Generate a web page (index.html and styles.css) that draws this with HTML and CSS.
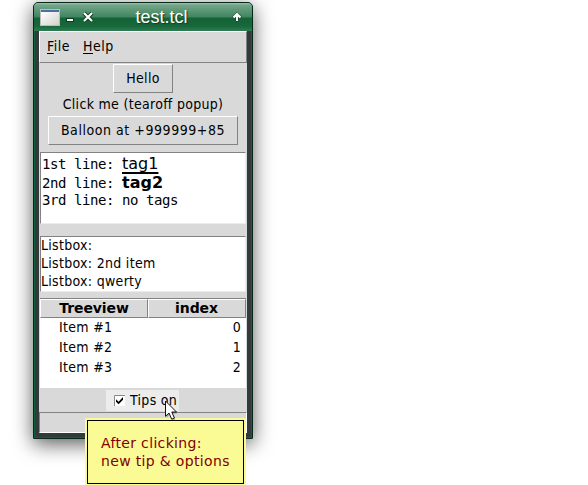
FILE: index.html
```
<!DOCTYPE html>
<html lang="en">
<head>
<meta charset="utf-8">
<title>test.tcl</title>
<link rel="stylesheet" href="styles.css">
</head>
<body>
<div class="window">
  <header class="titlebar">
    <svg class="app-icon" width="20" height="17" viewBox="0 0 20 17"><defs><linearGradient id="g" x2="1" y2="1"><stop stop-color="#fff"/><stop offset="1" stop-color="#d2d2cd"/></linearGradient></defs><rect width="20" height="17" fill="#b9beb9"/><rect x="1" y="1" width="18" height="2" fill="#4a6ea8"/><rect x="1" y="3" width="18" height="13" fill="url(#g)"/></svg>
    <svg class="minimize" width="8" height="12" viewBox="0 0 8 12"><path d="M0 7h8v4H0z" fill="#0b3f22"/><path d="M1 8h6v2H1z" fill="#fff"/></svg>
    <svg class="close" width="12" height="12" viewBox="0 0 12 12"><path d="M2 2l8 8M10 2l-8 8" stroke="#0b3f22" stroke-width="4"/><path d="M2 2l8 8M10 2l-8 8" stroke="#fff" stroke-width="2.2"/></svg>
    <span class="title">test.tcl</span>
    <svg class="shade" width="10" height="10" viewBox="0 0 10 10"><path d="M5 .5L.8 4.7l1.4 1.5L4 4.8V9h2V4.8l1.8 1.4 1.4-1.5z" fill="#fff" stroke="#0b3f22" stroke-width="1" paint-order="stroke"/></svg>
  </header>
  <main class="client">
    <nav class="menubar"><span><u>F</u>ile</span><span><u>H</u>elp</span></nav>
    <button class="button hello"><span>Hello</span></button>
    <div class="label"><span>Click me (tearoff popup)</span></div>
    <button class="button balloon"><span>Balloon at +999999+85</span></button>
    <div class="text">
      <div class="line first">1st line: <span class="tag1">tag1</span></div>
      <div class="line second">2nd line: <b class="tag2">tag2</b></div>
      <div class="line third">3rd line: no tags</div>
    </div>
    <div class="listbox"><div>Listbox:</div><div>Listbox: 2nd item</div><div>Listbox: qwerty</div></div>
    <div class="tree">
      <div class="heading">Treeview</div><div class="heading index">index</div>
      <div class="item">Item #1</div><div class="value">0</div>
      <div class="item">Item #2</div><div class="value">1</div>
      <div class="item">Item #3</div><div class="value">2</div>
    </div>
    <div class="check">
      <svg width="11" height="11" viewBox="0 0 11 11"><path d="M0 0h11v11H0z" fill="#fff"/><path d="M.5 11V.5H11" fill="none" stroke="#888"/><path d="M2 4.3l2.6 2.4L9 2v2.8L4.6 9.2 2 6.8z" fill="#000"/></svg>
      <span>Tips on</span>
    </div>
    <div class="status"></div>
  </main>
</div>
<div class="tooltip"><div><span class="tip1">After clicking:</span><br><span class="tip2">new tip &amp; options</span></div></div>
<svg class="cursor" width="15" height="22" viewBox="0 0 15 22"><path d="M1.5 1.5v15.3l3.5-3.3 2.7 6.2 2.7-1.2-2.6-6h4.7z" transform="translate(1 1)" fill="#000" opacity=".25"/><path d="M1.5 1v15.3L5 13l2.7 6.2 2.7-1.2-2.6-6H12.5z" fill="#fff" stroke="#111"/></svg>
</body>
</html>
```
FILE: styles.css
```
* { box-sizing: border-box; }
body { margin: 0; width: 588px; height: 485px; overflow: hidden; position: relative; background: #fff; color: #000; font: 14px/18px "DejaVu Sans Condensed", "DejaVu Sans", sans-serif; font-stretch: condensed; letter-spacing: .3px; white-space: nowrap; }
svg { display: block; flex: none; }
.window { width: 220px; height: 437px; margin: 2px 0 0 33px; display: flex; flex-direction: column; border: 1px solid #032b18; border-radius: 5px 5px 1px 1px; background: #343a3c; box-shadow: inset 1px 0 #08643a, inset -1px 0 #08643a, inset 0 -1px #08643a, 0 5px 20px rgba(0,0,0,.65); }
.titlebar { height: 28px; flex: none; display: flex; align-items: center; padding: 0 10px 0 6px; border-radius: 4px 4px 0 0; background: linear-gradient(#a3c2b0 0, #74a58a 2px, #3f8560 14px, #146337 15px, #18673b 23px, #2f7d53 28px); }
.minimize { margin-left: 6px; }
.close { margin-left: 8px; }
.title { flex: 1; text-align: center; margin-left: -3px; font: 18px/28px "Liberation Sans", sans-serif; letter-spacing: 0; color: #fff; text-shadow: 1px 1px 1px #0b3f22; }
.client { width: 208px; height: 402px; margin-left: 5px; background: #d9d9d9; display: flex; flex-direction: column; align-items: center; }
.menubar { align-self: stretch; height: 32px; flex: none; display: flex; gap: 13px; padding: 5px 7px; border: 1px solid; border-color: #fff #828282 #828282 #fff; letter-spacing: .5px; }
u { text-underline-offset: 2px; text-decoration-thickness: 1px; }
.button { font: inherit; color: inherit; letter-spacing: inherit; height: 29px; margin: 0; padding: 0 0 2px; flex: none; background: #d9d9d9; border: 1px solid; border-color: #fff #828282 #828282 #fff; }
.hello { width: 60px; margin-top: 1px; }
.label { height: 23px; line-height: 22px; flex: none; }
.balloon { width: 190px; letter-spacing: .55px; }
.text { width: 206px; height: 72px; flex: none; margin-top: 7px; padding: 1px; background: #fff; border: 1px solid; border-color: #828282 #ececec #ececec #828282; font: 14px/18px "DejaVu Sans Mono", monospace; font-stretch: normal; letter-spacing: -.43px; }
.line { white-space: pre; height: 18px; }
.first { height: 20px; line-height: 20px; }
.third { line-height: 16px; }
.tag1, .tag2 { font-family: "DejaVu Sans", sans-serif; font-size: 16px; line-height: 18px; letter-spacing: 0; }
.tag1 { text-decoration: underline 2px; text-underline-offset: 3px; text-decoration-skip-ink: none; }
.listbox { width: 206px; height: 56px; flex: none; margin-top: 12px; background: #fff; border: 1px solid; border-color: #828282 #ececec #ececec #828282; }
.listbox > div { line-height: 16px; margin-bottom: 2px; }
.tree { width: 206px; height: 90px; flex: none; margin-top: 6px; display: grid; grid-template-columns: 108px 98px; grid-template-rows: 20px 20px 20px 20px; background: #fff; border-top: 1px solid #828282; }
.tree > div { line-height: 16px; }
.heading { margin-bottom: 1px; text-align: center; font-family: "DejaVu Sans", sans-serif; font-stretch: normal; font-weight: bold; letter-spacing: -.1px; background: #d9d9d9; border: 1px solid; border-color: #fff #828282 #828282 #fff; }
.tree > .heading { line-height: 17px; }
.index { padding-right: 1px; }
.item { padding-left: 19px; }
.value { text-align: right; padding-right: 5px; }
.check { width: 73px; height: 21px; flex: none; margin-top: 2px; margin-left: -1px; background: #ececec; display: flex; align-items: center; gap: 5px; padding-left: 8px; }
.check span { padding-bottom: 2px; }
.status { align-self: stretch; flex: 1; margin-top: 1px; border: 1px solid; border-color: #828282 #fff #fff #828282; }
.tooltip { position: absolute; left: 85px; top: 418px; width: 161px; height: 67px; padding: 2px 2px 1px; background: #fbfb96; color: #7f0000; font-family: "DejaVu Sans", sans-serif; font-stretch: normal; letter-spacing: .34px; }
.tooltip > div { height: 64px; border: 1px solid #000; padding: 13px; }
.cursor { position: absolute; left: 164px; top: 400px; }
```
